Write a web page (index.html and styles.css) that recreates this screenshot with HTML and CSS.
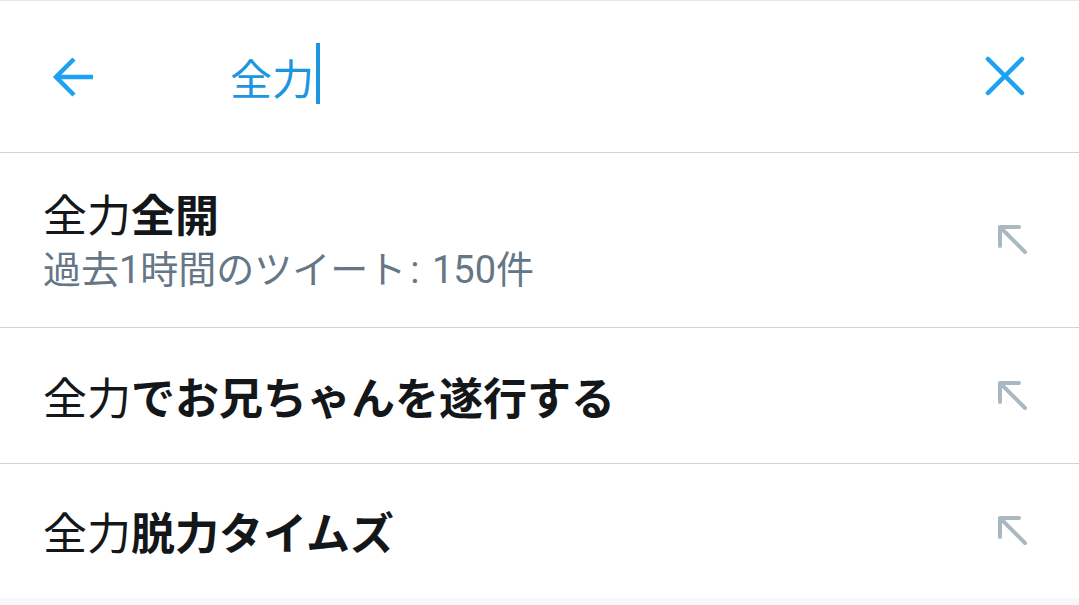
FILE: index.html
```html
<!DOCTYPE html>
<html lang="ja">
<head>
<meta charset="utf-8">
<link rel="stylesheet" href="styles.css">
</head>
<body>
<div class="screen">
  <header class="search-bar">
    <svg class="back" width="48" height="48" viewBox="0 0 48 48">
      <path d="M43 24H7M24 6L6 24l18 18" fill="none" stroke="#1da1f2" stroke-width="4.5"/>
    </svg>
    <div class="query"><span>全力</span><span class="caret"></span></div>
    <svg class="close" width="44" height="44" viewBox="0 0 44 44">
      <path d="M4 4L38 38M38 4L4 38" fill="none" stroke="#1da1f2" stroke-width="4.5" stroke-linecap="round"/>
    </svg>
  </header>
  <ul class="suggestions">
    <li class="item tall">
      <div class="texts">
        <div class="main">全力<b>全開</b></div>
        <div class="sub">過去1時間のツイート<span class="colon">:</span> 150件</div>
      </div>
      <svg class="fill" width="32" height="32" viewBox="0 0 32 32"><path d="M3 22V3h19M3 3l25 25" fill="none" stroke="#aab8c2" stroke-width="4" stroke-linecap="round" stroke-linejoin="round"/></svg>
    </li>
    <li class="item">
      <div class="texts">
        <div class="main">全力<b>でお兄ちゃんを遂行する</b></div>
      </div>
      <svg class="fill" width="32" height="32" viewBox="0 0 32 32"><path d="M3 22V3h19M3 3l25 25" fill="none" stroke="#aab8c2" stroke-width="4" stroke-linecap="round" stroke-linejoin="round"/></svg>
    </li>
    <li class="item last">
      <div class="texts">
        <div class="main">全力<b>脱力タイムズ</b></div>
      </div>
      <svg class="fill" width="32" height="32" viewBox="0 0 32 32"><path d="M3 22V3h19M3 3l25 25" fill="none" stroke="#aab8c2" stroke-width="4" stroke-linecap="round" stroke-linejoin="round"/></svg>
    </li>
  </ul>
</div>
</body>
</html>
```
FILE: styles.css
```css
html, body {
  margin: 0;
  padding: 0;
  background: #f5f7f9;
  font-family: "Noto Sans CJK JP", "Noto Sans", sans-serif;
}
.screen {
  width: 1079px;
  background: #fff;
}
.search-bar {
  box-sizing: border-box;
  height: 153px;
  border-top: 1px solid #e6e9eb;
  border-bottom: 1px solid #d0d4d6;
  display: flex;
  align-items: center;
  padding: 0 51px 0 50px;
}
.back {
  flex: none;
  margin-top: 1px;
}
.query {
  flex: 1;
  margin-left: 132px;
  display: flex;
  align-items: center;
  color: #1d96e0;
  font-size: 42px;
  line-height: 1;
}
.caret {
  display: inline-block;
  width: 4px;
  height: 61px;
  background: #1d96e0;
  margin-left: 2px;
  margin-top: -6px;
}
.close {
  flex: none;
}
.suggestions {
  list-style: none;
  margin: 0;
  padding: 0;
}
.item {
  box-sizing: border-box;
  height: 136px;
  border-bottom: 1px solid #d0d4d6;
  display: flex;
  align-items: center;
  padding: 0 50px 0 43px;
}
.item.tall {
  height: 175px;
}
.item.last {
  height: 134px;
  border-bottom: none;
}
.texts {
  flex: 1;
}
.main {
  font-size: 44px;
  line-height: 56px;
  color: #14171a;
}
.main b {
  font-weight: 700;
}
.sub {
  font-family: Roboto, "Noto Sans CJK JP", sans-serif;
  font-size: 38px;
  line-height: 50px;
  color: #657786;
  margin-top: 4px;
}
.colon {
  margin: 0 3px 0 4px;
}
.item svg {
  flex: none;
}
```
